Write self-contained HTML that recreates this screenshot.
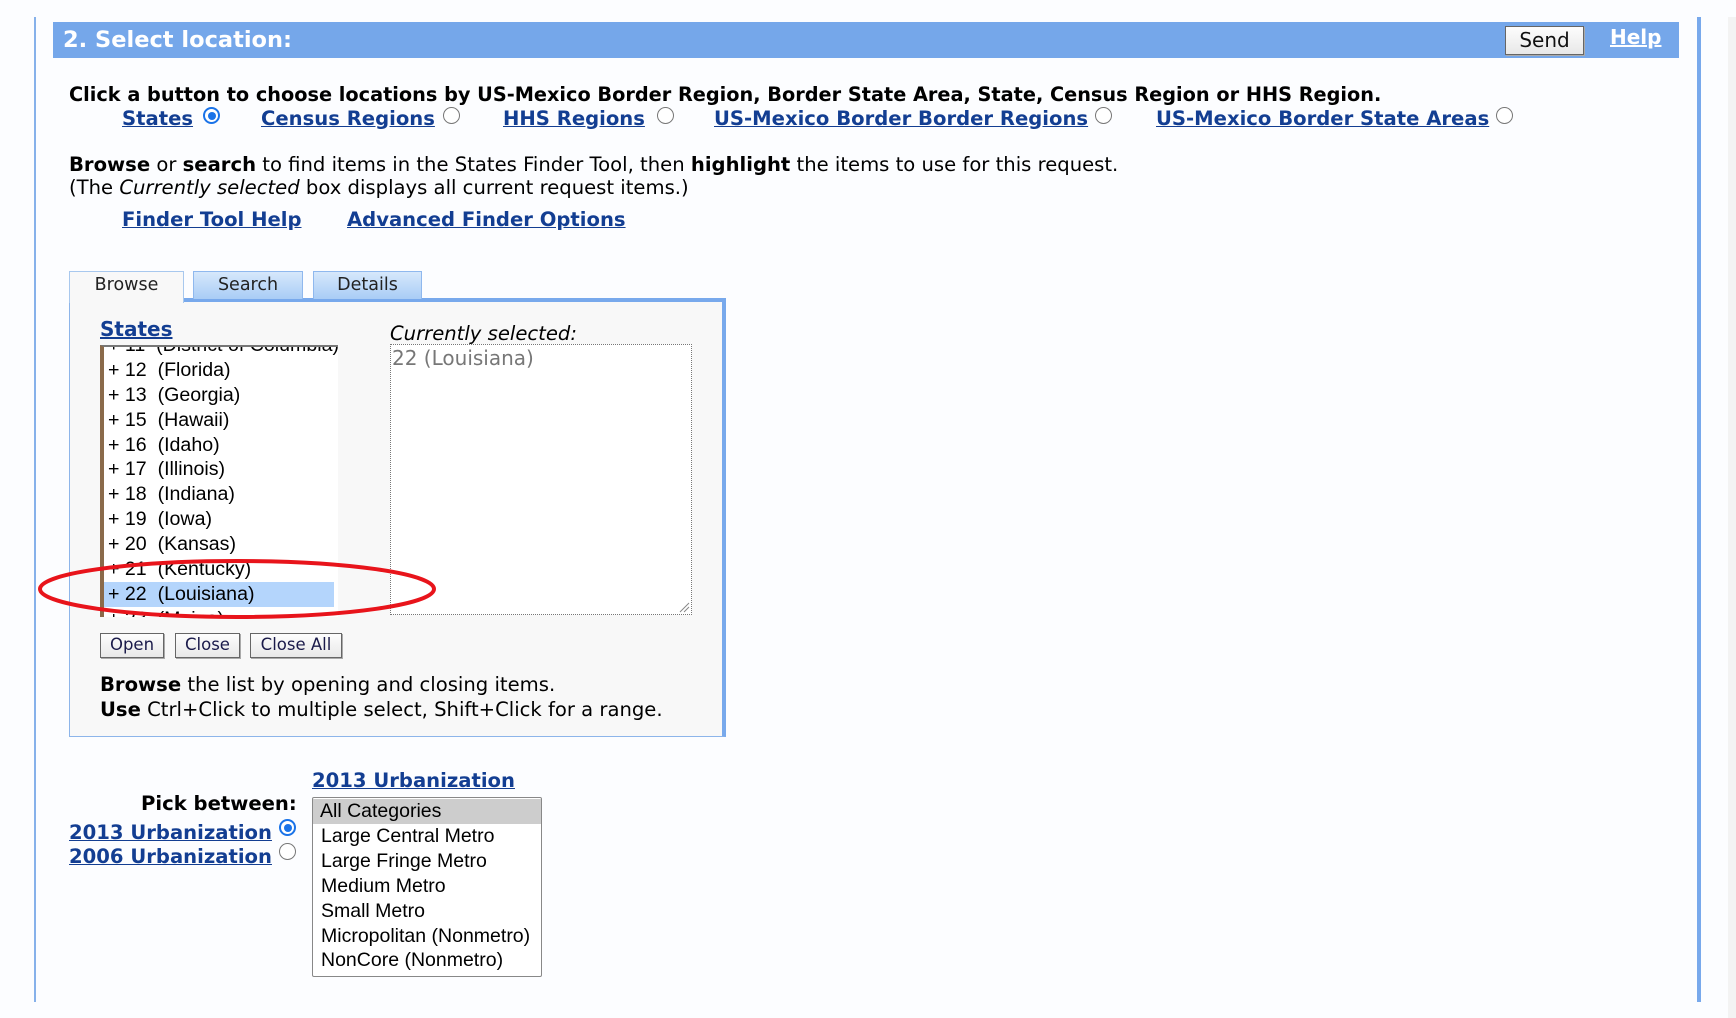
<!DOCTYPE html>
<html><head><meta charset="utf-8"><style>
*{margin:0;padding:0;box-sizing:border-box}
body{width:1736px;height:1018px;background:#fcfdff;position:relative;overflow:hidden;font-family:"DejaVu Sans","Liberation Sans",sans-serif;font-size:19.6px;color:#000}
.a{position:absolute;white-space:nowrap;line-height:23px}
a,.l{color:#133e92;font-weight:bold;text-decoration:underline}
.r{display:inline-block;vertical-align:top;position:relative;top:0px;width:17px;height:17px;border-radius:50%;border:1.5px solid #777;background:#fff;margin-left:6px}
.r.on{border:2px solid #1a73e8}
.r.on::after{content:"";position:absolute;left:2.5px;top:2.5px;width:8px;height:8px;border-radius:50%;background:#1a73e8}
.ar{font-family:"Liberation Sans",Arial,sans-serif;font-size:19.6px}
.btn{position:absolute;height:25px;border:1.5px solid #666;background:linear-gradient(#fdfdfd,#e8e8e8);font-family:"DejaVu Sans",sans-serif;font-size:16.5px;color:#1a1a4a;text-align:center;line-height:22px;box-shadow:1px 1px 0 #aaa}
.tab{position:absolute;top:271px;height:28px;border:1px solid #8fb8ee;border-bottom:none;background:linear-gradient(#d6e8fb,#a9cdf6);text-align:center;font-size:17.5px;line-height:27px;color:#222}
</style></head><body>
<div style="position:absolute;left:34px;top:17px;width:2px;height:985px;background:#86b1ea"></div>
<div style="position:absolute;left:1697px;top:17px;width:4px;height:985px;background:#78a9ec"></div>
<div style="position:absolute;left:1728px;top:17px;width:8px;height:1001px;background:#f3f3f3"></div>
<div style="position:absolute;left:53px;top:22px;width:1626px;height:36px;background:#75a7ea"></div>
<div class="a" style="left:63px;top:28px;color:#fff;font-weight:bold;font-size:22.5px;line-height:25px">2. Select location:</div>
<div class="btn" style="left:1505px;top:26px;width:79px;height:29px;font-size:20px;line-height:26px;color:#111">Send</div>
<div class="a" style="left:1610px;top:26px;color:#fff;font-weight:bold;text-decoration:underline;font-size:20px">Help</div>

<div class="a" style="left:69px;top:83px;font-weight:bold;font-size:19.3px">Click a button to choose locations by US-Mexico Border Region, Border State Area, State, Census Region or HHS Region.</div>
<div class="a l" style="left:122px;top:107px">States</div><div class="a" style="left:197px;top:107px"><span class="r on"></span></div>
<div class="a l" style="left:261px;top:107px">Census Regions</div><div class="a" style="left:437px;top:107px"><span class="r"></span></div>
<div class="a l" style="left:503px;top:107px">HHS Regions</div><div class="a" style="left:651px;top:107px"><span class="r"></span></div>
<div class="a l" style="left:714px;top:107px">US-Mexico Border Border Regions</div><div class="a" style="left:1089px;top:107px"><span class="r"></span></div>
<div class="a l" style="left:1156px;top:107px">US-Mexico Border State Areas</div><div class="a" style="left:1490px;top:107px"><span class="r"></span></div>

<div class="a" style="left:69px;top:153px"><b>Browse</b> or <b>search</b> to find items in the States Finder Tool, then <b>highlight</b> the items to use for this request.</div>
<div class="a" style="left:69px;top:176px">(The <i>Currently selected</i> box displays all current request items.)</div>
<div class="a l" style="left:122px;top:208px">Finder Tool Help</div>
<div class="a l" style="left:347px;top:208px">Advanced Finder Options</div>

<div style="position:absolute;left:69px;top:298px;width:657px;height:439px;background:#f8f8f8;border:1.5px solid #8db5ea;border-right:4px solid #78a9ec;border-top:4px solid #78a9ec"></div>
<div class="tab" style="left:69px;width:115px;background:#f8f8f8;height:32px;border-color:#a8c8ee">Browse</div>
<div class="tab" style="left:193px;width:110px">Search</div>
<div class="tab" style="left:313px;width:109px">Details</div>

<div class="a l" style="left:100px;top:318px;font-size:20px">States</div>
<div style="position:absolute;left:100px;top:345px;width:238px;height:272px;background:#fff;border-left:4px solid #8a6a4a;border-top:2px solid #777;overflow:hidden">
<div class="ar" style="position:absolute;left:4px;top:-39px;line-height:24.9px;white-space:pre">
+ 11  (District of Columbia)
+ 12  (Florida)
+ 13  (Georgia)
+ 15  (Hawaii)
+ 16  (Idaho)
+ 17  (Illinois)
+ 18  (Indiana)
+ 19  (Iowa)
+ 20  (Kansas)
+ 21  (Kentucky)
<span style="display:inline-block;width:230px;margin-left:-4px;padding-left:4px;background:#b4d5fc">+ 22  (Louisiana)</span>
+ 23  (Maine)</div>
</div>
<div class="a" style="left:390px;top:322px;font-style:italic">Currently selected:</div>
<div style="position:absolute;left:390px;top:344px;width:302px;height:271px;background:#fff;border:1px dotted #777"></div>
<div class="a" style="left:392px;top:347px;color:#777;font-size:20px">22 (Louisiana)</div>
<svg style="position:absolute;left:678px;top:601px" width="12" height="12"><path d="M2 11L11 2M6 11L11 6" stroke="#888" stroke-width="1"/></svg>

<div class="btn" style="left:100px;top:633px;width:64px">Open</div>
<div class="btn" style="left:175px;top:633px;width:65px">Close</div>
<div class="btn" style="left:250px;top:633px;width:92px">Close All</div>
<div class="a" style="left:100px;top:673px"><b>Browse</b> the list by opening and closing items.</div>
<div class="a" style="left:100px;top:698px"><b>Use</b> Ctrl+Click to multiple select, Shift+Click for a range.</div>

<svg style="position:absolute;left:0;top:0" width="1736" height="1018"><ellipse cx="237" cy="589" rx="197" ry="28" fill="none" stroke="#e8141b" stroke-width="4"/></svg>

<div class="a l" style="left:312px;top:769px">2013 Urbanization</div>
<div class="a" style="left:141px;top:792px;font-weight:bold">Pick between:</div>
<div class="a l" style="left:69px;top:821px">2013 Urbanization</div><div class="a" style="left:273px;top:819px"><span class="r on"></span></div>
<div class="a l" style="left:69px;top:845px">2006 Urbanization</div><div class="a" style="left:273px;top:843px"><span class="r"></span></div>
<div style="position:absolute;left:312px;top:797px;width:230px;height:180px;background:#fff;border:1.5px solid #888;border-radius:2px;overflow:hidden">
<div class="ar" style="position:absolute;left:0;top:1px;width:100%;line-height:24.9px;font-size:19.5px">
<div style="background:#cdcdcd;padding-left:7px">All Categories</div>
<div style="padding-left:8px">Large Central Metro</div>
<div style="padding-left:8px">Large Fringe Metro</div>
<div style="padding-left:8px">Medium Metro</div>
<div style="padding-left:8px">Small Metro</div>
<div style="padding-left:8px">Micropolitan (Nonmetro)</div>
<div style="padding-left:8px">NonCore (Nonmetro)</div>
</div></div>
</body></html>
